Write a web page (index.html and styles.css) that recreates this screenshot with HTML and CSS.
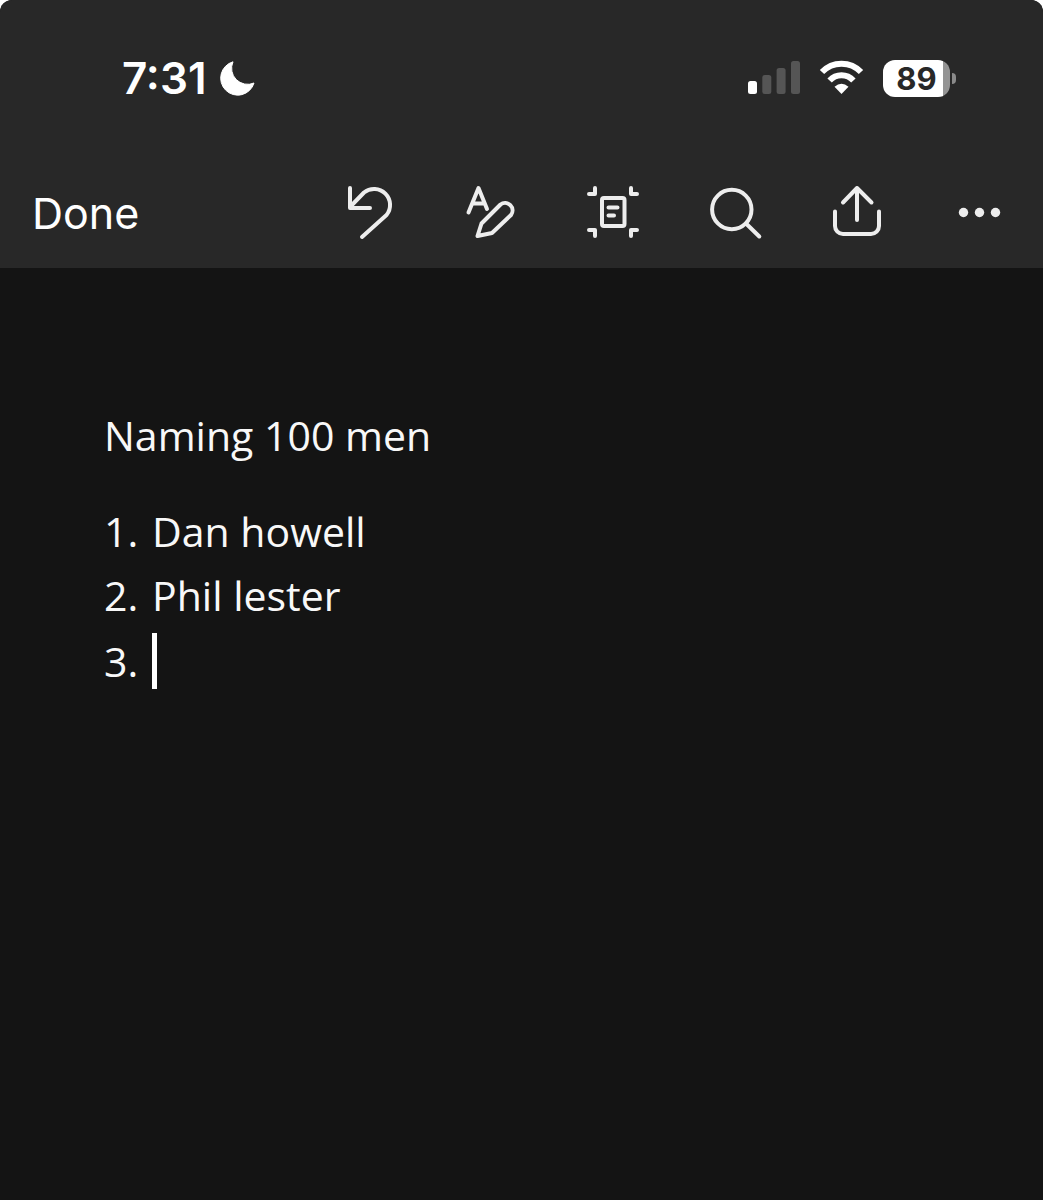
FILE: index.html
```
<!DOCTYPE html>
<html lang="en">
<head>
  <meta charset="UTF-8">
  <meta name="viewport" content="width=device-width, initial-scale=1.0">
  <title>Naming 100 men</title>
  <link rel="stylesheet" href="styles.css">
</head>
<body>
  <div class="screen">
    <header class="top">
      <div class="status">
        <div class="clock">
          <span>7:31</span>
          <svg class="moon" viewBox="0 0 36 36" width="36" height="36" aria-hidden="true">
            <path d="M13 1.8A17 17 0 1 0 34 23A16 16 0 0 1 13 1.8Z"/>
          </svg>
        </div>
        <div class="indicators">
          <svg viewBox="0 0 52 40" width="52" height="40" aria-hidden="true">
            <rect x="0" y="23" width="9" height="13" rx="2.5" fill="#fff"/>
            <rect x="14.3" y="17" width="9" height="19" rx="2.5" fill="#555"/>
            <rect x="28.6" y="10" width="9" height="26" rx="2.5" fill="#555"/>
            <rect x="43" y="3" width="9" height="33" rx="2.5" fill="#555"/>
          </svg>
          <svg viewBox="0 0 45 40" width="45" height="40" aria-hidden="true">
            <g fill="none" stroke="#fff" stroke-width="6">
              <path d="M3 14A27 27 0 0 1 42 14"/>
              <path d="M10.6 22.5A16.2 16.2 0 0 1 34.4 22.5"/>
            </g>
            <path d="M15.5 28.8Q22.5 22.8 29.5 28.8L22.5 36Z" fill="#fff"/>
          </svg>
          <div class="battery">
            <span class="level">89</span>
            <span class="nub"></span>
          </div>
        </div>
      </div>

      <nav class="toolbar">
        <button class="done" type="button">Done</button>
        <div class="tools">
          <button class="tool" type="button" aria-label="Undo">
            <svg viewBox="0 0 56 56">
              <path d="M9 4V24H29M9 23L23 8.5A16 16 0 0 1 45.5 31L21 53"/>
            </svg>
          </button>
          <button class="tool" type="button" aria-label="Formatting">
            <svg viewBox="0 0 56 56">
              <path d="M5.5 28.5L15.5 4L24 25M9.5 19.5H21.5"/>
              <path d="M14.5 52L18.5 39.5L37.5 20.5A7.5 7.5 0 0 1 48 31L29 49Z"/>
            </svg>
          </button>
          <button class="tool" type="button" aria-label="Page view">
            <svg viewBox="0 0 56 56">
              <path d="M10 4V10H4M46 4V10H52M4 46H10V52M52 46H46V52"/>
              <rect x="17" y="14" width="22.5" height="28" rx="2"/>
              <path d="M23.5 23.5H32.5M23.5 31.5H29"/>
            </svg>
          </button>
          <button class="tool" type="button" aria-label="Search">
            <svg viewBox="0 0 56 56">
              <circle cx="24.8" cy="25.5" r="19.7"/>
              <path d="M39 39.5L52.3 52.5"/>
            </svg>
          </button>
          <button class="tool" type="button" aria-label="Share">
            <svg viewBox="0 0 56 56">
              <path d="M28 36V4M14 18.5L28 4L42.5 18.5M6 27.5V42a8 8 0 0 0 8 8H42a8 8 0 0 0 8-8V27.5"/>
            </svg>
          </button>
          <button class="tool" type="button" aria-label="More">
            <svg class="dots" viewBox="0 0 56 56">
              <circle cx="12.5" cy="28.5" r="4.7"/>
              <circle cx="28.5" cy="28.5" r="4.7"/>
              <circle cx="44.5" cy="28.5" r="4.7"/>
            </svg>
          </button>
        </div>
      </nav>
    </header>

    <main class="page">
      <p>Naming 100 men</p>
      <ol class="names">
        <li><span class="num">1.</span><span>Dan howell</span></li>
        <li><span class="num">2.</span><span>Phil lester</span></li>
        <li><span class="num">3.</span><span class="caret"></span></li>
      </ol>
    </main>
  </div>
</body>
</html>
```
FILE: styles.css
```
/* Reset & Base */
* { margin: 0; padding: 0; box-sizing: border-box; }
body {
  background: #fff;
  color: #fff;
  font-family: Inter, sans-serif;
}
button { background: none; border: none; color: inherit; font: inherit; cursor: pointer; }
svg { display: block; }

.screen {
  display: flex; flex-direction: column;
  min-height: 100vh;
  background: #141414;
  border-radius: 12px 12px 0 0;
  overflow: hidden;
}

/* Header */
.top { background: #282828; padding: 58px 36px 28px 32px; }

/* Status bar */
.status {
  display: flex; justify-content: space-between; align-items: center;
  height: 40px; margin-bottom: 86px; padding: 0 51px 0 90px;
}
.clock { display: flex; align-items: center; gap: 13px; font-size: 44px; font-weight: 600; line-height: 40px; }
.moon { fill: #fff; stroke: #fff; stroke-width: 1; stroke-linejoin: round; }
.indicators { display: flex; align-items: center; gap: 19px; }

/* Battery */
.battery { display: flex; align-items: center; gap: 2px; }
.level {
  width: 67px; height: 37px; border-radius: 12px;
  background: linear-gradient(90deg, #fff 89%, #949494 89%);
  color: #282828; font-size: 31px; font-weight: 700; line-height: 37px; text-align: center;
}
.nub { width: 4px; height: 11px; background: #8a8a8a; border-radius: 0 4px 4px 0; }

/* Toolbar */
.toolbar { display: flex; justify-content: space-between; align-items: center; }
.done { font-size: 43px; line-height: 54px; padding-top: 2px; }
.tools { display: flex; gap: 66px; }
.tool { width: 56px; height: 56px; }
.tool svg {
  width: 56px; height: 56px;
  fill: none; stroke: #ededed; stroke-width: 4;
  stroke-linecap: round; stroke-linejoin: round;
}
.tool .dots { fill: #ededed; stroke: none; }

/* Document */
.page {
  flex: 1;
  padding: 135px 104px 64px;
  color: #f8f8f8;
  font-family: "Open Sans", sans-serif; font-size: 41px; line-height: 64px;
}
.names { list-style: none; margin-top: 32px; }
.names li { display: flex; align-items: center; }
.num { width: 48px; }
.caret { width: 5px; height: 56px; margin: 6px 0; background: #fff; }
```
